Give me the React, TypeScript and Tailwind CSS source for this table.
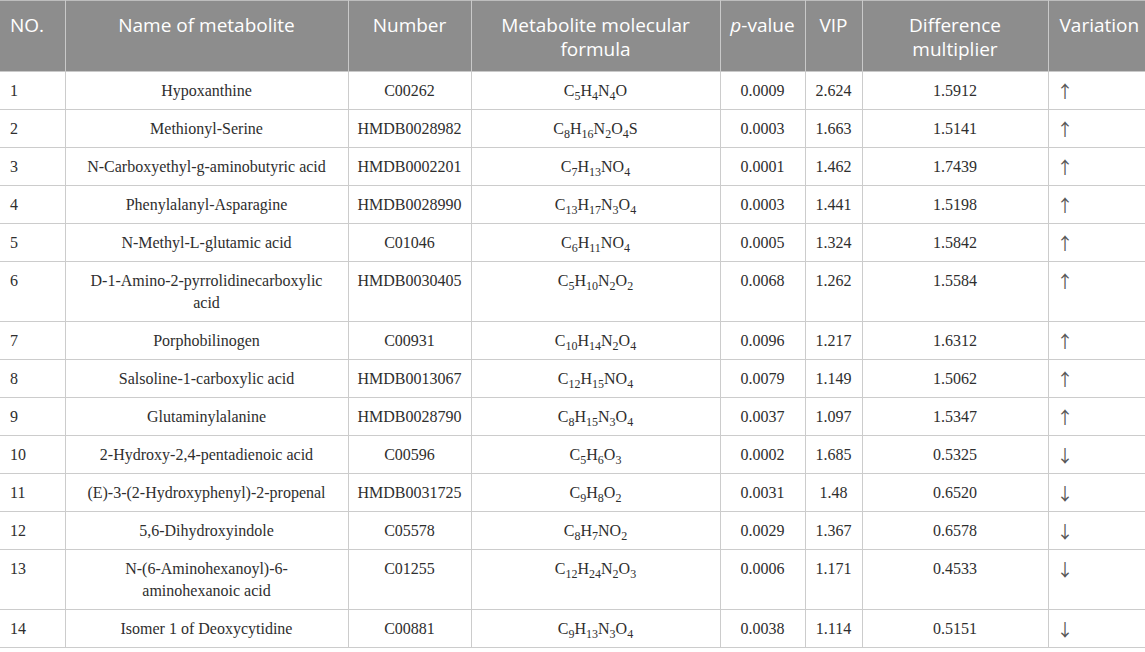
import * as React from "react";

type F = [string, string?][];

interface Row {
  no: number;
  name: React.ReactNode;
  id: string;
  formula: F;
  p: string;
  vip: string;
  diff: string;
  up: boolean;
  tall?: boolean;
}

const rows: Row[] = [
  { no: 1, name: "Hypoxanthine", id: "C00262", formula: [["C", "5"], ["H", "4"], ["N", "4"], ["O"]], p: "0.0009", vip: "2.624", diff: "1.5912", up: true },
  { no: 2, name: "Methionyl-Serine", id: "HMDB0028982", formula: [["C", "8"], ["H", "16"], ["N", "2"], ["O", "4"], ["S"]], p: "0.0003", vip: "1.663", diff: "1.5141", up: true },
  { no: 3, name: "N-Carboxyethyl-g-aminobutyric acid", id: "HMDB0002201", formula: [["C", "7"], ["H", "13"], ["NO", "4"]], p: "0.0001", vip: "1.462", diff: "1.7439", up: true },
  { no: 4, name: "Phenylalanyl-Asparagine", id: "HMDB0028990", formula: [["C", "13"], ["H", "17"], ["N", "3"], ["O", "4"]], p: "0.0003", vip: "1.441", diff: "1.5198", up: true },
  { no: 5, name: "N-Methyl-L-glutamic acid", id: "C01046", formula: [["C", "6"], ["H", "11"], ["NO", "4"]], p: "0.0005", vip: "1.324", diff: "1.5842", up: true },
  { no: 6, name: <>D-1-Amino-2-pyrrolidinecarboxylic<br />acid</>, id: "HMDB0030405", formula: [["C", "5"], ["H", "10"], ["N", "2"], ["O", "2"]], p: "0.0068", vip: "1.262", diff: "1.5584", up: true, tall: true },
  { no: 7, name: "Porphobilinogen", id: "C00931", formula: [["C", "10"], ["H", "14"], ["N", "2"], ["O", "4"]], p: "0.0096", vip: "1.217", diff: "1.6312", up: true },
  { no: 8, name: "Salsoline-1-carboxylic acid", id: "HMDB0013067", formula: [["C", "12"], ["H", "15"], ["NO", "4"]], p: "0.0079", vip: "1.149", diff: "1.5062", up: true },
  { no: 9, name: "Glutaminylalanine", id: "HMDB0028790", formula: [["C", "8"], ["H", "15"], ["N", "3"], ["O", "4"]], p: "0.0037", vip: "1.097", diff: "1.5347", up: true },
  { no: 10, name: "2-Hydroxy-2,4-pentadienoic acid", id: "C00596", formula: [["C", "5"], ["H", "6"], ["O", "3"]], p: "0.0002", vip: "1.685", diff: "0.5325", up: false },
  { no: 11, name: "(E)-3-(2-Hydroxyphenyl)-2-propenal", id: "HMDB0031725", formula: [["C", "9"], ["H", "8"], ["O", "2"]], p: "0.0031", vip: "1.48", diff: "0.6520", up: false },
  { no: 12, name: "5,6-Dihydroxyindole", id: "C05578", formula: [["C", "8"], ["H", "7"], ["NO", "2"]], p: "0.0029", vip: "1.367", diff: "0.6578", up: false },
  { no: 13, name: <>N-(6-Aminohexanoyl)-6-<br />aminohexanoic acid</>, id: "C01255", formula: [["C", "12"], ["H", "24"], ["N", "2"], ["O", "3"]], p: "0.0006", vip: "1.171", diff: "0.4533", up: false, tall: true },
  { no: 14, name: "Isomer 1 of Deoxycytidine", id: "C00881", formula: [["C", "9"], ["H", "13"], ["N", "3"], ["O", "4"]], p: "0.0038", vip: "1.114", diff: "0.5151", up: false },
];

const Formula = ({ parts }: { parts: F }) => (
  <>
    {parts.map(([el, n], i) => (
      <React.Fragment key={i}>
        {el}
        {n && <sub className="text-[12px] -bottom-[4px]">{n}</sub>}
      </React.Fragment>
    ))}
  </>
);

const th = "border border-[#c9c9c9] border-t-[#bdbdbd] align-top pt-[12px] font-normal leading-[24px]";
const td = "border border-[#cccccc] align-top pt-[8px] leading-[22px]";

export default function App() {
  return (
    <div className="w-[1145px] h-[652px] bg-white overflow-hidden">
      <table className="table-fixed border-collapse w-[1145px] text-[#2e2e2e]">
        <colgroup>
          <col className="w-[65px]" />
          <col className="w-[283px]" />
          <col className="w-[123px]" />
          <col className="w-[249px]" />
          <col className="w-[85px]" />
          <col className="w-[57px]" />
          <col className="w-[186px]" />
          <col className="w-[97px]" />
        </colgroup>
        <thead>
          <tr className="h-[71px] bg-[#8d8d8d] text-white text-[19px] font-['Open_Sans',sans-serif]">
            <th className={`${th} text-left pl-[10px] border-l-0`}>NO.</th>
            <th className={th}>Name of metabolite</th>
            <th className={th}>Number</th>
            <th className={`${th} px-6`}>Metabolite molecular formula</th>
            <th className={th}><i>p</i>-value</th>
            <th className={th}>VIP</th>
            <th className={`${th} px-10`}>Difference multiplier</th>
            <th className={`${th} text-left pl-[11px] border-r-0`}>Variation</th>
          </tr>
        </thead>
        <tbody className="font-['Liberation_Serif',serif] text-[16px]">
          {rows.map((r) => (
            <tr key={r.no} className={r.tall ? "h-[60px]" : "h-[38px]"}>
              <td className={`${td} text-left pl-[10px] border-l-0`}>{r.no}</td>
              <td className={`${td} text-center px-2`}>{r.name}</td>
              <td className={`${td} text-center`}>{r.id}</td>
              <td className={`${td} text-center`}><Formula parts={r.formula} /></td>
              <td className={`${td} text-center`}>{r.p}</td>
              <td className={`${td} text-center`}>{r.vip}</td>
              <td className={`${td} text-center`}>{r.diff}</td>
              <td className={`${td} text-left pl-[8px] border-r-0`}>
                <span className="font-['Noto_Sans_CJK_SC',sans-serif] text-[17px] text-[#555]">{r.up ? "↑" : "↓"}</span>
              </td>
            </tr>
          ))}
        </tbody>
      </table>
    </div>
  );
}
